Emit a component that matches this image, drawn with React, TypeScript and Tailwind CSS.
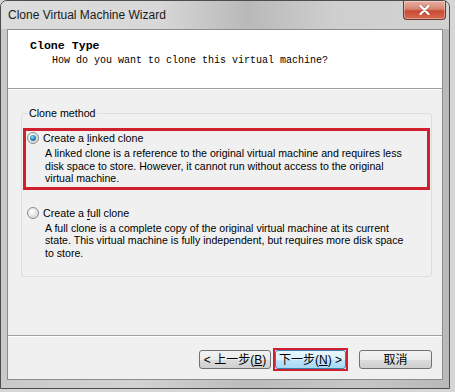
import React from "react";

const uiFont = "font-['Liberation_Sans','Noto_Sans_CJK_SC',sans-serif]";
const monoFont = "font-['Liberation_Mono',monospace]";

function Radio({ checked }: { checked?: boolean }) {
  return (
    <span className="flex h-[12px] w-[12px] shrink-0 items-center justify-center rounded-full border border-[#8a8d90] bg-[radial-gradient(circle_at_40%_35%,#ffffff,#e4e4e4_55%,#c9c9c9)]">
      {checked && (
        <span className="h-[6px] w-[6px] rounded-full bg-[radial-gradient(circle_at_40%_35%,#8fe3f4,#2b8bbf_45%,#0f3f6a)]" />
      )}
    </span>
  );
}

function CloneOption({
  checked,
  label,
  mnemonicIndex,
  lines,
}: {
  checked?: boolean;
  label: string;
  mnemonicIndex: number;
  lines: string[];
}) {
  return (
    <div>
      <div className="flex h-[14px] items-center gap-[4px]">
        <Radio checked={checked} />
        <span className="text-[10.7px] leading-[14px] text-black">
          {label.slice(0, mnemonicIndex)}
          <span className="underline underline-offset-2">{label[mnemonicIndex]}</span>
          {label.slice(mnemonicIndex + 1)}
        </span>
      </div>
      <div className="mt-[2px] pl-[18px] text-[10.6px] leading-[12.5px] text-black">
        {lines.map((l) => (
          <div key={l}>{l}</div>
        ))}
      </div>
    </div>
  );
}

const btnBase =
  "flex h-[19px] items-center justify-center rounded-[3px] border text-[12px] leading-none text-black";
const btnNormal =
  "border-[#707070] bg-[linear-gradient(to_bottom,#f2f2f2_0%,#ebebeb_50%,#dddddd_51%,#cfcfcf_100%)]";
const btnHot =
  "border-[#3c7fb1] bg-[linear-gradient(to_bottom,#eaf6fd_0%,#d9f0fc_50%,#bee6fd_51%,#a7d9f5_100%)]";

export default function App() {
  return (
    <div className={`h-[392px] w-[455px] bg-[#d6d6d6] ${uiFont}`}>
      <div className="flex h-[389px] w-[450px] flex-col rounded-t-[7px] border border-[#4d4d4d] bg-[linear-gradient(to_right,#c9c9c9,#d3d3d3_30%,#bcbcbc_55%,#c6c6c6_80%,#b9b9b9)]">
        {/* Title bar */}
        <div className="flex h-[28px] items-start justify-between rounded-t-[6px] bg-[linear-gradient(to_right,#dcdcdc,#d8d8d8_35%,#b9b9b9_55%,#cfcfcf_75%,#d2d2d2)]">
          <span className="pl-[7px] pt-[6px] text-[12px] leading-[16px] text-[#1a1a1a]">
            Clone Virtual Machine Wizard
          </span>
          <button
            type="button"
            aria-label="Close"
            className="mr-[3px] flex h-[19px] w-[43px] items-center justify-center rounded-b-[4px] border border-t-0 border-[#6a3a32] bg-[linear-gradient(to_bottom,#e8b0a4_0%,#d88472_45%,#c84a33_55%,#d66a50_100%)] shadow-[inset_0_0_0_1px_rgba(255,255,255,0.35)]"
          >
            <svg width="11" height="10" viewBox="0 0 11 10" aria-hidden="true">
              <path
                d="M1.5 1 L9.5 9 M9.5 1 L1.5 9"
                stroke="#3a1410"
                strokeWidth="3.4"
                strokeLinecap="round"
                opacity="0.35"
              />
              <path
                d="M1.5 1 L9.5 9 M9.5 1 L1.5 9"
                stroke="#ffffff"
                strokeWidth="2.4"
                strokeLinecap="round"
              />
            </svg>
          </button>
        </div>

        {/* Client area */}
        <div className="mx-[6px] flex h-[351px] flex-col border border-[#8c8c8c] bg-[#f0f0f0]">
          <div className="h-[59px] border-b border-[#a0a0a0] bg-white pl-[22px] pt-[9px]">
            <div className={`${monoFont} text-[11.6px] font-bold leading-[14px] text-black`}>
              Clone Type
            </div>
            <div className={`${monoFont} mt-[1px] pl-[22px] text-[10px] leading-[13px] text-black`}>
              How do you want to clone this virtual machine?
            </div>
          </div>

          <div className="flex flex-1 flex-col border-t border-white">
            <fieldset className="ml-[13px] mt-[17px] h-[170px] w-[411px] rounded-[3px] border border-[#d5dfe5] px-[1px]">
              <legend className="ml-[5px] px-[1px] text-[10.7px] leading-[12px] text-black">
                Clone method
              </legend>
              <div className="mt-[9px] border-[3px] border-[#d0202e] pb-[2px] pl-[1px]">
                <CloneOption
                  checked
                  label="Create a linked clone"
                  mnemonicIndex={9}
                  lines={[
                    "A linked clone is a reference to the original virtual machine and requires less",
                    "disk space to store. However, it cannot run without access to the original",
                    "virtual machine.",
                  ]}
                />
              </div>
              <div className="mt-[16px] pl-[4px]">
                <CloneOption
                  label="Create a full clone"
                  mnemonicIndex={9}
                  lines={[
                    "A full clone is a complete copy of the original virtual machine at its current",
                    "state. This virtual machine is fully independent, but requires more disk space",
                    "to store.",
                  ]}
                />
              </div>
            </fieldset>

            <div className="mt-auto border-t border-[#a0a0a0]">
              <div className="flex items-center justify-end border-t border-white pb-[8px] pr-[10px] pt-[11px]">
                <button type="button" className={`${btnBase} ${btnNormal} w-[72px]`}>
                  &lt; 上一步(<span className="underline">B</span>)
                </button>
                <div className="ml-[2px] border-[2px] border-[#d0202e]">
                  <button type="button" className={`${btnBase} ${btnHot} w-[71px]`}>
                    下一步(<span className="underline">N</span>) &gt;
                  </button>
                </div>
                <button type="button" className={`${btnBase} ${btnNormal} ml-[11px] w-[73px]`}>
                  取消
                </button>
              </div>
            </div>
          </div>
        </div>
      </div>
    </div>
  );
}
